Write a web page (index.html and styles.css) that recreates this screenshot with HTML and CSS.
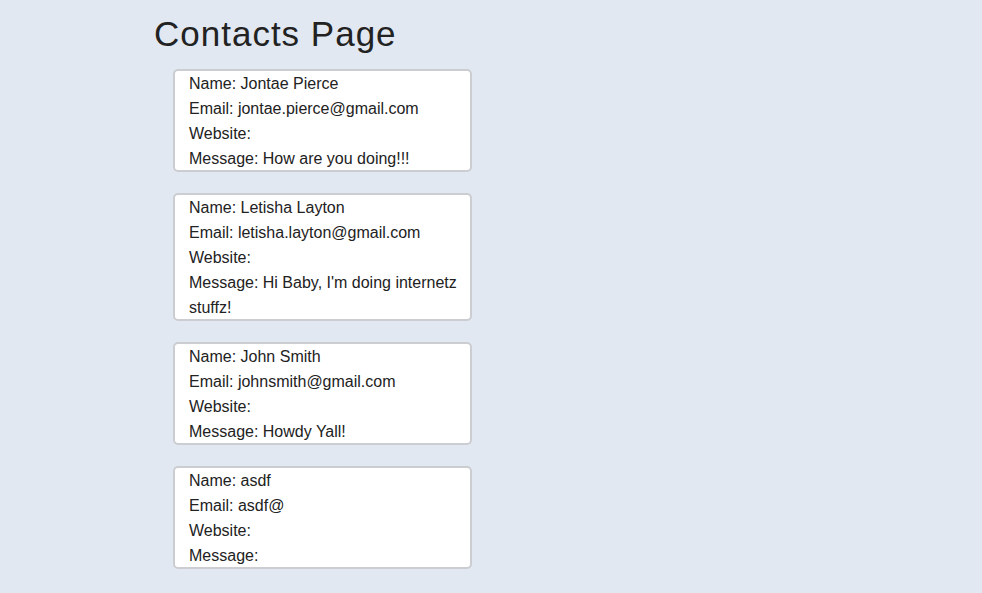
FILE: index.html
```html
<!DOCTYPE html>
<html lang="en">
<head>
<meta charset="utf-8">
<title>Contacts Page</title>
<link rel="stylesheet" href="styles.css">
</head>
<body>
<main class="page">
  <h1 class="title">Contacts Page</h1>
  <ul class="contacts">
    <li class="card">
      <div class="card-body">
        <div>Name: Jontae Pierce</div>
        <div>Email: jontae.pierce@gmail.com</div>
        <div>Website: </div>
        <div>Message: How are you doing!!!</div>
      </div>
    </li>
    <li class="card">
      <div class="card-body">
        <div>Name: Letisha Layton</div>
        <div>Email: letisha.layton@gmail.com</div>
        <div>Website: </div>
        <div>Message: Hi Baby, I'm doing internetz stuffz!</div>
      </div>
    </li>
    <li class="card">
      <div class="card-body">
        <div>Name: John Smith</div>
        <div>Email: johnsmith@gmail.com</div>
        <div>Website: </div>
        <div>Message: Howdy Yall!</div>
      </div>
    </li>
    <li class="card">
      <div class="card-body">
        <div>Name: asdf</div>
        <div>Email: asdf@</div>
        <div>Website: </div>
        <div>Message: </div>
      </div>
    </li>
  </ul>
</main>
</body>
</html>
```
FILE: styles.css
```css
html, body {
  margin: 0;
  padding: 0;
}
body {
  background: #e1e8f2;
  color: #222;
  font-family: "Liberation Sans", Arial, Helvetica, sans-serif;
  font-size: 16px;
  line-height: 25px;
  min-height: 593px;
}
.page {
  padding: 14px 0 0 154px;
}
.title {
  margin: 0;
  font-size: 35px;
  font-weight: normal;
  line-height: 40px;
  letter-spacing: 1px;
}
.contacts {
  list-style: none;
  margin: 15px 0 0 19px;
  padding: 0;
  display: flex;
  flex-direction: column;
  gap: 21px;
}
.card {
  box-sizing: border-box;
  width: 299px;
  background: #fff;
  border: 2px solid #cbcdd0;
  border-radius: 5px;
  padding: 0 6px 0 14px;
}
.card-body {
  margin: 0 0 -1px;
}
```
